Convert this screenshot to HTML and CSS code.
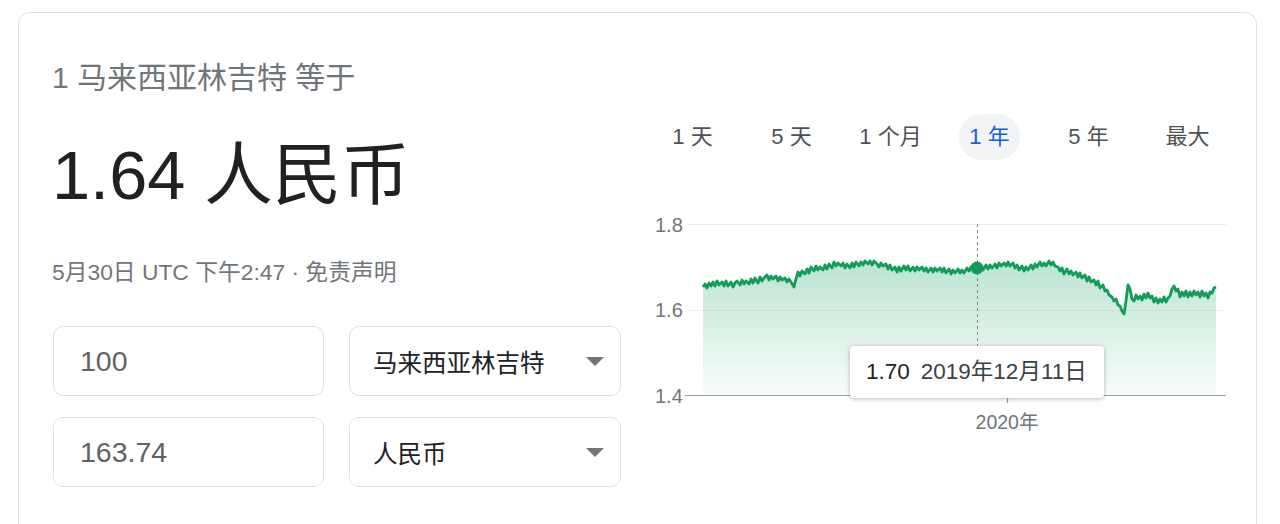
FILE: index.html
```html
<!DOCTYPE html>
<html lang="zh-CN">
<head>
<meta charset="utf-8">
<link rel="stylesheet" href="styles.css">
</head>
<body>
<div class="card">
  <div class="left">
    <div class="title">1 马来西亚林吉特 等于</div>
    <div class="big">1.64 人民币</div>
    <div class="date">5月30日 UTC 下午2:47 · 免责声明</div>
    <div class="form">
      <div class="field input">100</div>
      <div class="field select"><span>马来西亚林吉特</span><i class="arrow"></i></div>
      <div class="field input">163.74</div>
      <div class="field select"><span>人民币</span><i class="arrow"></i></div>
    </div>
  </div>
  <div class="right">
    <div class="tabs">
      <div class="tab"><span>1 天</span></div>
      <div class="tab"><span>5 天</span></div>
      <div class="tab"><span>1 个月</span></div>
      <div class="tab"><span class="sel">1 年</span></div>
      <div class="tab"><span>5 年</span></div>
      <div class="tab"><span>最大</span></div>
    </div>
    <div class="chart">
      <svg class="plot" width="597" height="240" viewBox="643 200 597 240">
        <defs>
          <linearGradient id="g" x1="0" y1="0" x2="0" y2="1">
            <stop offset="0" stop-color="#0f9d58" stop-opacity="0.28"/>
            <stop offset="1" stop-color="#0f9d58" stop-opacity="0.03"/>
          </linearGradient>
        </defs>
        <line x1="688" y1="224.5" x2="1226" y2="224.5" stroke="#ececec" stroke-width="1"/>
        <line x1="688" y1="310.5" x2="1226" y2="310.5" stroke="#f0f0f0" stroke-width="1"/>
        <path fill="url(#g)" d="M703 287 L705 284 L707 288 L709 283 L711 286 L713 282 L715 286 L717 281 L719 285 L722 282 L724 286 L726 281 L728 286 L731 282 L733 287 L735 283 L737 281 L740 285 L742 280 L744 284 L746 281 L749 284 L751 279 L753 283 L755 278 L758 283 L760 277 L762 281 L764 278 L767 275 L769 280 L771 276 L773 279 L776 276 L778 281 L780 277 L782 280 L785 278 L787 282 L789 279 L791 282 L794 287 L796 279 L798 272 L800 276 L802 271 L805 274 L807 269 L809 273 L811 267 L814 271 L816 266 L818 270 L820 267 L823 270 L825 265 L827 269 L829 264 L832 268 L834 262 L836 266 L838 263 L841 266 L843 263 L845 268 L847 264 L850 268 L852 263 L854 267 L856 262 L859 266 L861 262 L863 265 L865 261 L868 264 L870 261 L872 265 L874 261 L877 264 L879 267 L881 263 L883 266 L886 264 L888 269 L890 265 L892 270 L895 267 L897 272 L899 267 L901 271 L904 266 L906 270 L908 266 L910 271 L913 267 L915 271 L917 267 L919 270 L922 267 L924 271 L926 268 L928 272 L931 268 L933 272 L935 268 L937 271 L940 268 L942 272 L944 268 L946 273 L949 269 L951 274 L953 270 L955 273 L958 269 L960 273 L962 270 L964 273 L967 268 L969 271 L971 267 L974 266 L977 268 L979 271 L981 266 L983 270 L986 265 L988 269 L990 265 L992 268 L995 264 L997 268 L999 263 L1001 266 L1004 263 L1006 266 L1008 262 L1010 266 L1013 263 L1015 268 L1017 265 L1019 270 L1022 266 L1024 271 L1026 267 L1028 270 L1031 265 L1033 269 L1035 264 L1037 267 L1040 262 L1042 266 L1044 263 L1046 266 L1049 261 L1051 265 L1053 262 L1055 266 L1058 267 L1060 271 L1062 268 L1064 274 L1067 269 L1069 274 L1071 271 L1073 275 L1076 272 L1078 277 L1080 273 L1082 278 L1085 275 L1087 281 L1089 277 L1091 282 L1094 280 L1096 285 L1098 281 L1100 288 L1103 285 L1105 291 L1107 290 L1109 295 L1112 297 L1114 301 L1116 299 L1118 305 L1120 306 L1122 311 L1124 314 L1126 301 L1128 285 L1130 289 L1132 299 L1134 301 L1136 295 L1138 299 L1140 296 L1142 300 L1144 294 L1146 298 L1148 293 L1150 298 L1152 296 L1154 302 L1156 298 L1158 303 L1160 299 L1162 302 L1164 297 L1166 302 L1168 298 L1170 296 L1172 289 L1174 286 L1176 291 L1178 289 L1180 297 L1182 292 L1184 296 L1186 291 L1188 297 L1190 292 L1192 296 L1194 291 L1196 295 L1198 292 L1200 297 L1202 291 L1204 296 L1206 293 L1208 298 L1210 292 L1212 293 L1214 288 L1216 287 L1216 395 L703 395 Z"/>
        <path fill="none" stroke="#129c5a" stroke-width="2.8" stroke-linejoin="round" d="M703 287 L705 284 L707 288 L709 283 L711 286 L713 282 L715 286 L717 281 L719 285 L722 282 L724 286 L726 281 L728 286 L731 282 L733 287 L735 283 L737 281 L740 285 L742 280 L744 284 L746 281 L749 284 L751 279 L753 283 L755 278 L758 283 L760 277 L762 281 L764 278 L767 275 L769 280 L771 276 L773 279 L776 276 L778 281 L780 277 L782 280 L785 278 L787 282 L789 279 L791 282 L794 287 L796 279 L798 272 L800 276 L802 271 L805 274 L807 269 L809 273 L811 267 L814 271 L816 266 L818 270 L820 267 L823 270 L825 265 L827 269 L829 264 L832 268 L834 262 L836 266 L838 263 L841 266 L843 263 L845 268 L847 264 L850 268 L852 263 L854 267 L856 262 L859 266 L861 262 L863 265 L865 261 L868 264 L870 261 L872 265 L874 261 L877 264 L879 267 L881 263 L883 266 L886 264 L888 269 L890 265 L892 270 L895 267 L897 272 L899 267 L901 271 L904 266 L906 270 L908 266 L910 271 L913 267 L915 271 L917 267 L919 270 L922 267 L924 271 L926 268 L928 272 L931 268 L933 272 L935 268 L937 271 L940 268 L942 272 L944 268 L946 273 L949 269 L951 274 L953 270 L955 273 L958 269 L960 273 L962 270 L964 273 L967 268 L969 271 L971 267 L974 266 L977 268 L979 271 L981 266 L983 270 L986 265 L988 269 L990 265 L992 268 L995 264 L997 268 L999 263 L1001 266 L1004 263 L1006 266 L1008 262 L1010 266 L1013 263 L1015 268 L1017 265 L1019 270 L1022 266 L1024 271 L1026 267 L1028 270 L1031 265 L1033 269 L1035 264 L1037 267 L1040 262 L1042 266 L1044 263 L1046 266 L1049 261 L1051 265 L1053 262 L1055 266 L1058 267 L1060 271 L1062 268 L1064 274 L1067 269 L1069 274 L1071 271 L1073 275 L1076 272 L1078 277 L1080 273 L1082 278 L1085 275 L1087 281 L1089 277 L1091 282 L1094 280 L1096 285 L1098 281 L1100 288 L1103 285 L1105 291 L1107 290 L1109 295 L1112 297 L1114 301 L1116 299 L1118 305 L1120 306 L1122 311 L1124 314 L1126 301 L1128 285 L1130 289 L1132 299 L1134 301 L1136 295 L1138 299 L1140 296 L1142 300 L1144 294 L1146 298 L1148 293 L1150 298 L1152 296 L1154 302 L1156 298 L1158 303 L1160 299 L1162 302 L1164 297 L1166 302 L1168 298 L1170 296 L1172 289 L1174 286 L1176 291 L1178 289 L1180 297 L1182 292 L1184 296 L1186 291 L1188 297 L1190 292 L1192 296 L1194 291 L1196 295 L1198 292 L1200 297 L1202 291 L1204 296 L1206 293 L1208 298 L1210 292 L1212 293 L1214 288 L1216 287"/>
        <line x1="977.5" y1="224" x2="977.5" y2="346" stroke="#80868b" stroke-width="1" stroke-dasharray="3 3"/>
        <circle cx="977" cy="268" r="6.5" fill="#129c5a"/>
        <line x1="685" y1="395.5" x2="1226" y2="395.5" stroke="#9aa0a6" stroke-width="1.2"/>
        <line x1="1007.5" y1="395" x2="1007.5" y2="403" stroke="#9aa0a6" stroke-width="1.2"/>
        <text class="ylab" x="655" y="232">1.8</text>
        <text class="ylab" x="655" y="317">1.6</text>
        <text class="ylab" x="655" y="403">1.4</text>
        <text class="xlab" x="1007" y="429" text-anchor="middle">2020年</text>
      </svg>
      <div class="tip"><span class="tv">1.70</span><span class="td">2019年12月11日</span></div>
    </div>
  </div>
</div>
</body>
</html>
```

FILE: styles.css
```css
html, body {
  margin: 0;
  padding: 0;
  background: #fff;
  overflow: hidden;
}
body {
  font-family: "Liberation Sans", Arial, "Noto Sans CJK SC", sans-serif;
  color: #202124;
}
.card {
  margin: 12px 0 0 18px;
  width: 1239px;
  height: 560px;
  border: 1px solid #dfe1e5;
  border-radius: 12px;
  box-sizing: border-box;
  padding: 47px 0 0 33px;
  display: flex;
  gap: 23px;
}
.left {
  width: 568px;
  flex: none;
}
.title {
  font-size: 30px;
  line-height: 36px;
  color: #70757a;
  height: 36px;
  white-space: nowrap;
}
.big {
  margin-top: 40px;
  font-size: 68.5px;
  line-height: 80px;
  height: 80px;
  color: #202124;
  white-space: nowrap;
}
.date {
  margin-top: 42px;
  font-size: 22.8px;
  line-height: 28px;
  height: 28px;
  color: #70757a;
  white-space: nowrap;
}
.form {
  margin-top: 40px;
  display: grid;
  grid-template-columns: 271px 272px;
  column-gap: 25px;
  row-gap: 21px;
  padding-left: 1px;
}
.field {
  height: 70px;
  border: 1px solid #dfe1e5;
  border-radius: 10px;
  box-sizing: border-box;
  display: flex;
  align-items: center;
  white-space: nowrap;
}
.input {
  padding-left: 26px;
  font-size: 28.5px;
  color: #5f6368;
}
.select {
  padding: 0 16px 0 23px;
  font-size: 24.5px;
  color: #202124;
  justify-content: space-between;
}
.arrow {
  width: 0;
  height: 0;
  border-left: 9px solid transparent;
  border-right: 9px solid transparent;
  border-top: 9px solid #70757a;
}
.right {
  width: 597px;
  flex: none;
}
.tabs {
  margin-top: 54px;
  display: grid;
  grid-template-columns: repeat(6, 99px);
  height: 46px;
}
.tab {
  display: flex;
  justify-content: center;
  align-items: center;
}
.tab span {
  font-size: 22px;
  line-height: 46px;
  height: 46px;
  padding: 0 10px;
  border-radius: 23px;
  color: #4d5156;
  white-space: nowrap;
}
.tab span.sel {
  background: #f1f3f4;
  color: #1a5fd0;
}
.chart {
  margin-top: 40px;
  position: relative;
  width: 597px;
  height: 240px;
}
.plot {
  display: block;
}
.ylab, .xlab {
  font-family: "Liberation Sans", Arial, "Noto Sans CJK SC", sans-serif;
  font-size: 20px;
  fill: #70757a;
}
.xlab {
  font-size: 19.5px;
}
.tip {
  position: absolute;
  left: 207px;
  top: 146px;
  width: 254px;
  height: 52px;
  box-sizing: border-box;
  background: #fff;
  border-radius: 4px;
  box-shadow: 0 1px 4px rgba(0, 0, 0, 0.28);
  padding-left: 16px;
  font-size: 22.5px;
  line-height: 52px;
  white-space: nowrap;
}
.tv {
  color: #202124;
  margin-right: 11px;
}
.td {
  color: #3c4043;
}
```
